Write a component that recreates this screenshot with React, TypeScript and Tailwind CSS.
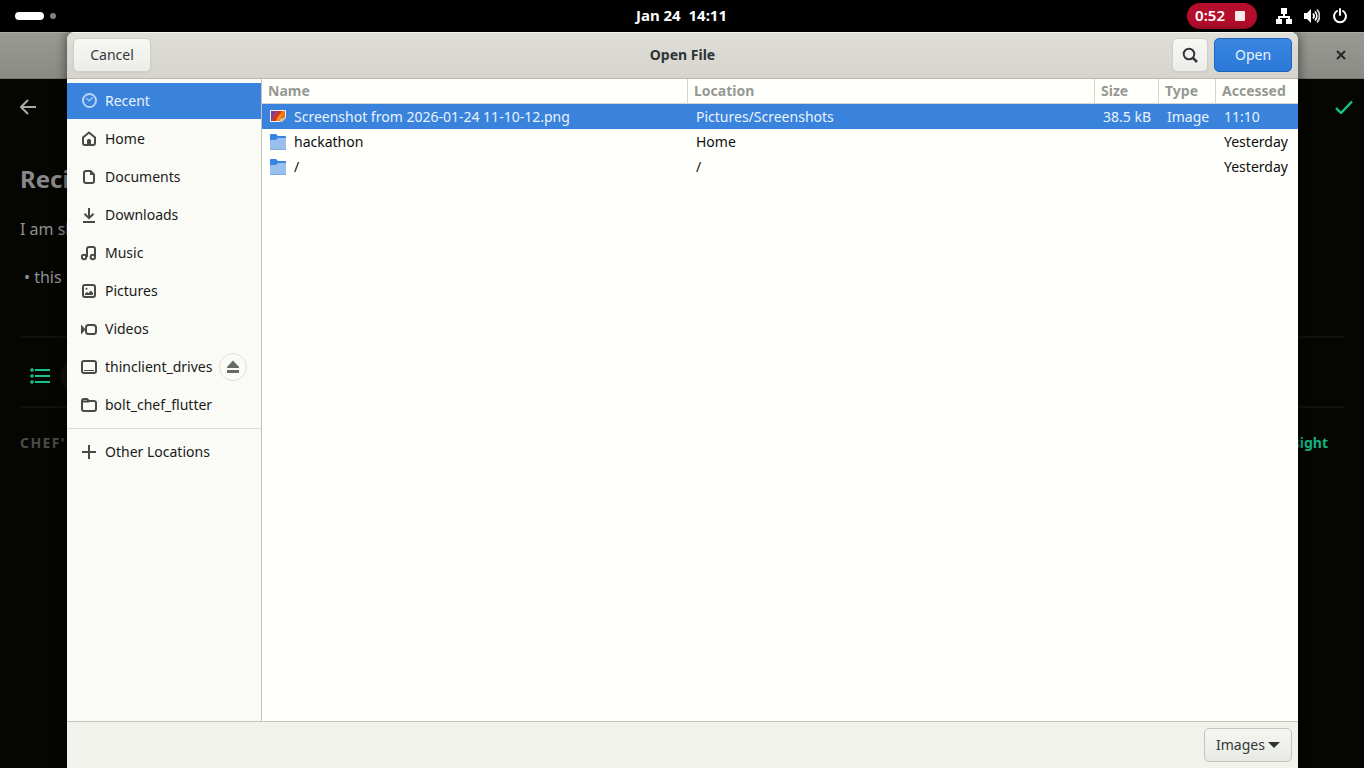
import { useState, type ReactNode } from 'react';

type Place = { id: string; name: string; icon: ReactNode; eject?: boolean };
type FileRow = { name: string; kind: 'image' | 'folder'; location: string; size: string; type: string; accessed: string };

const stroke = { fill: 'none', stroke: 'currentColor', strokeWidth: 2 } as const;

function Icon({ children, className = '' }: { children: ReactNode; className?: string }) {
  return (
    <svg viewBox="0 0 16 16" aria-hidden="true" className={`size-4 shrink-0 ${className}`}>
      {children}
    </svg>
  );
}

const PLACES: Place[] = [
  {
    id: 'recent',
    name: 'Recent',
    icon: <><circle cx="8.5" cy="7.5" r="6.5" {...stroke} /><path d="M5.5 5.2 8 7.8 11.8 4.4" {...stroke} strokeWidth="1.2" /></>,
  },
  {
    id: 'home',
    name: 'Home',
    icon: <><path d="M2 6.5 8 1.500l6 5V12a2 2 0 0 1-2 2H4a2 2 0 0 1-2-2Z" {...stroke} strokeLinejoin="round" /><path d="M6 14V9.500A1.500 1.500 0 0 1 7.500 8h1A1.500 1.500 0 0 1 10 9.500V14Z" fill="currentColor" /></>,
  },
  {
    id: 'documents',
    name: 'Documents',
    icon: <><path d="M5 2h4.5L13 5.5V12a2 2 0 0 1-2 2H5a2 2 0 0 1-2-2V4a2 2 0 0 1 2-2Z" {...stroke} /><path d="M9 2v4h4Z" fill="currentColor" /></>,
  },
  {
    id: 'downloads',
    name: 'Downloads',
    icon: <path d="M8 1v10M3.5 6.8 8 11.2l4.5-4.4M2 15h12" {...stroke} />,
  },
  {
    id: 'music',
    name: 'Music',
    icon: <><circle cx="3" cy="12" r="2.2" {...stroke} /><circle cx="11.8" cy="12" r="2.2" {...stroke} /><path d="M6 12V4a2 2 0 0 1 2-2h4a2 2 0 0 1 2 2v8" {...stroke} /></>,
  },
  {
    id: 'pictures',
    name: 'Pictures',
    icon: <><rect x="2" y="2" width="12" height="12" rx="2" {...stroke} /><path d="M4 12v-1.500L6 9l1.500 1L10 7.500l2 2.500v2Z" fill="currentColor" /><circle cx="5.500" cy="5.700" r="1" fill="currentColor" /></>,
  },
  {
    id: 'videos',
    name: 'Videos',
    icon: <><rect x="5" y="4" width="10" height="9" rx="2.5" {...stroke} /><path d="M0 3.5 4.5 8.5 0 13.5Z" fill="currentColor" /></>,
  },
  {
    id: 'thinclient',
    name: 'thinclient_drives',
    eject: true,
    icon: <><rect x="1" y="2" width="14" height="12" rx="2" {...stroke} /><path d="M3 11.5h10" {...stroke} strokeWidth="1" /></>,
  },
  {
    id: 'bolt',
    name: 'bolt_chef_flutter',
    icon: <path d="M1 4a2 2 0 0 1 2-2h3l2 2h5a2 2 0 0 1 2 2v6a2 2 0 0 1-2 2H3a2 2 0 0 1-2-2ZM2 4.500h6" {...stroke} />,
  },
];

const FILES: FileRow[] = [
  { name: 'Screenshot from 2026-01-24 11-10-12.png', kind: 'image', location: 'Pictures/Screenshots', size: '38.5 kB', type: 'Image', accessed: '11:10' },
  { name: 'hackathon', kind: 'folder', location: 'Home', size: '', type: '', accessed: 'Yesterday' },
  { name: '/', kind: 'folder', location: '/', size: '', type: '', accessed: 'Yesterday' },
];

function FileIcon({ kind }: { kind: FileRow['kind'] }) {
  if (kind === 'image') {
    return (
      <Icon>
        <path d="M1 1h14a1 1 0 0 1 1 1v7l-5 4H1a1 1 0 0 1-1-1V2a1 1 0 0 1 1-1Z" fill="#f6f5f4" />
        <path d="M1 2h14v7l-4 3H1Z" fill="#ee7010" />
        <path d="M1 2h7L4 6 2 12H1Z" fill="#813d9c" />
        <path d="M8 2 4 6 2 12h4l2-5 4-5Z" fill="#c43a2c" />
        <path d="M6 12 8 8l6-5-3 5-2 4Z" fill="#ff8c1a" />
        <path d="M16 7.500V9l-4 4H9.500c.5-1 .5-2.500 1.500-3.500 1-.5 3.500-.5 5-2Z" fill="#c6c5c2" />
      </Icon>
    );
  }
  return (
    <Icon>
      <path d="M0 1a1 1 0 0 1 1-1h5L8 2h7a1 1 0 0 1 1 1v4H0Z" fill="#3584e4" />
      <path d="M0 6.500 1 6h4.500L8 4h8v11.500H0Z" fill="#98bfee" />
      <path d="M0 15h16v1H0Z" fill="#7fa9dc" />
    </Icon>
  );
}

function TopBar() {
  return (
    <header className="grid h-8 shrink-0 grid-cols-[1fr_auto_1fr] items-center bg-black pr-4 pl-[15px] text-white">
      <div className="flex items-center gap-1.5">
        <span className="h-2 w-[29px] rounded-full bg-white" />
        <span className="size-1.5 rounded-full bg-[#808080]" />
      </div>
      <time className="text-[15px] font-bold whitespace-pre">Jan 24  14:11</time>
      <div className="flex items-center justify-end gap-3">
        <button className="mr-[7px] flex h-[26px] items-center gap-2.5 rounded-full bg-[#b50d2c] pr-3 pl-2 text-[15px] font-semibold">
          0:52
          <span className="size-2.5 rounded-[1px] bg-[#fbe9ec]" />
        </button>
        <Icon>
          <path d="M5 0h6v6H5ZM0 11h6v5H0ZM10 11h6v5h-6Z" fill="currentColor" />
          <path d="M8 6v3M3 12V9h10v3" {...stroke} />
        </Icon>
        <Icon>
          <path d="M0 5h3l4-4v14l-4-4H0Z" fill="currentColor" />
          <path d="M9 5.5c1.3 1.5 1.3 3.500 0 5M11 3.5c2.400 2.600 2.400 6.400 0 9" {...stroke} strokeWidth="1.8" />
          <path d="M13 1.500c3.300 3.700 3.300 9.300 0 13" {...stroke} strokeWidth="1.8" opacity=".8" />
        </Icon>
        <Icon>
          <path d="M5 3a6 6 0 1 0 6 0" {...stroke} strokeLinecap="round" />
          <path d="M8 1v6" {...stroke} strokeLinecap="round" />
        </Icon>
      </div>
    </header>
  );
}

/* The app window sitting dimmed behind the dialog */
function RecipePage() {
  return (
    <div className="flex min-h-0 flex-1 flex-col bg-[#050602]">
      <div className="flex h-[47px] shrink-0 items-center justify-end border-b border-[#77756e] bg-linear-to-b from-[#9a9a94] to-[#8b8b86] pr-[17px] inset-shadow-[0_1px_#aaaaa5]">
        <button aria-label="Close window" className="text-[#242626]">
          <svg viewBox="0 0 12 12" className="size-3"><path d="m2 2 8 8M10 2l-8 8" {...stroke} /></svg>
        </button>
      </div>
      <div className="flex h-14 items-center justify-between pr-[11px] pl-5">
        <button aria-label="Back" className="text-[#aaa9a7]">
          <Icon><path d="M16 8H1M8 1 1 8l7 7" {...stroke} /></Icon>
        </button>
        <button aria-label="Save" className="text-[#14c48c]">
          <svg viewBox="0 0 18 14" className="h-3.5 w-[18px]"><path d="m1 8 5 5L17 1.5" {...stroke} strokeWidth="2.4" /></svg>
        </button>
      </div>
      <div className="px-5 pt-7 text-base text-[#918f92]">
        <h1 className="text-2xl leading-8 font-bold text-[#89878a]">Reci</h1>
        <p className="mt-[22px] leading-6">I am sh</p>
        <p className="mt-6 ml-1 leading-6">• this</p>
        <div className="mt-[47px] flex h-[72px] items-center gap-2.5 border-y-2 border-[#10110d] pt-2 pl-2.5">
          <button aria-label="Ingredients" className="text-[#14c48c]">
            <svg viewBox="0 0 20 16" className="h-4 w-5">
              <path d="M5 2h15M5 8h15M5 14h15" {...stroke} />
              <path d="M2 2h.01M2 8h.01M2 14h.01" {...stroke} strokeWidth="3.600" strokeLinecap="round" />
            </svg>
          </button>
          <span className="size-8 rounded-full bg-[#10110f]" />
        </div>
        <div className="mt-[25px] flex items-center justify-between pr-4 text-sm leading-5">
          <h2 className="font-bold tracking-widest text-[#4b4b48]">CHEF'</h2>
          <a href="#insight" className="font-bold text-[#12b380]">sight</a>
        </div>
      </div>
    </div>
  );
}

function Sidebar({ current, onSelect }: { current: string; onSelect: (id: string) => void }) {
  return (
    <nav aria-label="Places" className="w-[195px] shrink-0 border-r border-[#c4c3be] bg-[#fafbf6] pt-1">
      <ul className="flex flex-col gap-0.5">
        {PLACES.map(p => {
          const active = p.id === current;
          return (
            <li key={p.id} className={active ? 'flex h-9 items-center bg-[#3a83dc] text-[#eaf2fc]' : 'flex h-9 items-center text-[#191a19]'}>
              <button onClick={() => onSelect(p.id)} className="flex h-full items-center gap-2 pl-3.5 whitespace-nowrap">
                <Icon className={active ? 'text-[#b5d3f5]' : 'text-[#484a47]'}>{p.icon}</Icon>
                {p.name}
              </button>
              {p.eject && (
                <button aria-label="Eject" className="mr-3.5 ml-auto grid size-7 shrink-0 place-items-center rounded-full border border-[#dddeda] text-[#656b69]">
                  <Icon><path d="M8 1.5 14 8v1H2V8ZM2 11h12v3H2Z" fill="currentColor" /></Icon>
                </button>
              )}
            </li>
          );
        })}
      </ul>
      <hr className="my-[5px] border-[#dadbd6]" />
      <button onClick={() => onSelect('other')} className="flex h-9 w-full items-center gap-2 pl-3.5 text-[#191a19]">
        <Icon className="text-[#484a47]"><path d="M8 1v14M1 8h14" {...stroke} /></Icon>
        Other Locations
      </button>
    </nav>
  );
}

function FileTable() {
  const [selected, setSelected] = useState(0);
  const head = 'border-b border-l border-[#d5d4cf] px-1.5 text-left font-bold first:border-l-0';

  return (
    <table className="w-full table-fixed border-separate border-spacing-0 whitespace-nowrap">
      <colgroup>
        <col />
        <col className="w-[407px]" />
        <col className="w-16" />
        <col className="w-[57px]" />
        <col className="w-[83px]" />
      </colgroup>
      <thead className="text-[#969894]">
        <tr className="h-[25px]">
          <th className={head}>Name</th>
          <th className={head}>Location</th>
          <th className={head}>Size</th>
          <th className={head}>Type</th>
          <th className={head}>Accessed</th>
        </tr>
      </thead>
      <tbody>
        {FILES.map((f, i) => (
          <tr
            key={f.name}
            onClick={() => setSelected(i)}
            className={i === selected ? 'h-[25px] bg-[#3a83dc] text-[#e9f2fd]' : 'h-[25px] text-[#0e0f0e]'}
          >
            <td className="pl-2">
              <span className="flex items-center gap-2"><FileIcon kind={f.kind} />{f.name}</span>
            </td>
            <td className="pl-[9px]">{f.location}</td>
            <td className="pr-[7px] text-right">{f.size}</td>
            <td className="pl-[9px]">{f.type}</td>
            <td className="pl-[9px]">{f.accessed}</td>
          </tr>
        ))}
      </tbody>
    </table>
  );
}

function OpenFileDialog() {
  const [place, setPlace] = useState('recent');
  const button = 'h-[34px] rounded-[5px] border border-[#cfcec7] bg-linear-to-b from-[#f7f7f3] to-[#ecece8] text-[#33393b] shadow-xs';

  return (
    <section
      role="dialog"
      aria-label="Open File"
      className="absolute inset-y-0 right-[66px] left-[67px] flex flex-col overflow-hidden rounded-t-lg bg-[#fffffb] shadow-[0_0_12px_rgba(0,0,0,0.6)]"
    >
      <header className="grid h-[47px] shrink-0 grid-cols-[1fr_auto_1fr] items-center border-b border-[#bdb6aa] bg-linear-to-b from-[#dfdfd8] to-[#d5d4ce] px-1.5 inset-shadow-[0_1px_#f4f4f0]">
        <div className="flex"><button className={`${button} w-[78px]`}>Cancel</button></div>
        <h2 className="font-bold text-[#2e3436]">Open File</h2>
        <div className="flex justify-end gap-1.5">
          <button aria-label="Search" className={`${button} grid w-9 place-items-center`}>
            <Icon><circle cx="7" cy="7" r="5.300" {...stroke} /><path d="m11 11 4 4" {...stroke} strokeWidth="2.500" /></Icon>
          </button>
          <button className="h-[34px] w-[78px] rounded-[5px] border border-[#1c65bd] bg-linear-to-b from-[#3a86e2] to-[#2a78d8] text-[#eaf3fd]">Open</button>
        </div>
      </header>
      <div className="flex min-h-0 flex-1">
        <Sidebar current={place} onSelect={setPlace} />
        <div className="min-w-0 flex-1"><FileTable /></div>
      </div>
      <footer className="flex h-[47px] shrink-0 items-center justify-end border-t border-[#c4c3be] bg-[#f2f2ed] px-1.5">
        <div className="relative">
          <select aria-label="File type" defaultValue="images" className="h-[34px] w-[88px] appearance-none rounded-[5px] border border-[#c5c4be] bg-linear-to-b from-[#f5f5f1] to-[#e9e9e5] pl-[11px] text-[#33393b]">
            <option value="images">Images</option>
          </select>
          <svg viewBox="0 0 12 6" aria-hidden="true" className="pointer-events-none absolute top-3.5 right-3 h-1.5 w-3 text-[#2e3436]">
            <path d="M0 0h12L6 6Z" fill="currentColor" />
          </svg>
        </div>
      </footer>
    </section>
  );
}

export default function App() {
  return (
    <div className="flex h-screen flex-col overflow-hidden bg-black font-['Noto_Sans','Open_Sans',sans-serif] text-sm">
      <TopBar />
      <main className="relative flex min-h-0 flex-1 flex-col">
        <RecipePage />
        <OpenFileDialog />
      </main>
    </div>
  );
}
